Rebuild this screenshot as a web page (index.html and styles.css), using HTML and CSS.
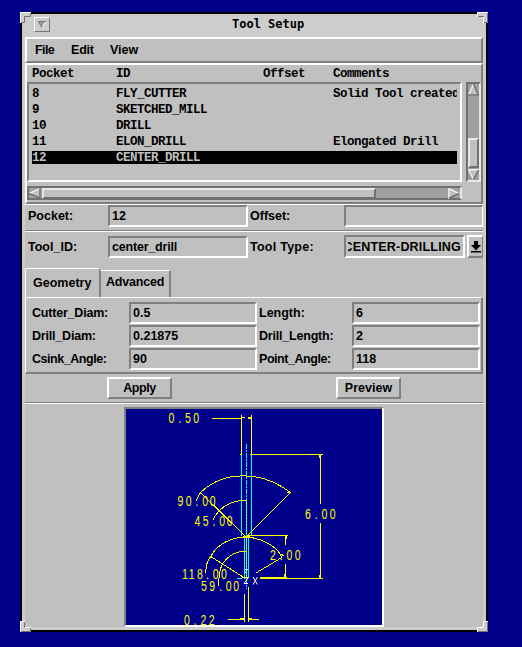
FILE: index.html
```html
<!DOCTYPE html>
<html lang="en">
<head>
<meta charset="utf-8">
<title>Tool Setup</title>
<link rel="stylesheet" href="styles.css">
</head>
<body>
<main class="window">
  <svg class="corner tl" viewBox="0 0 11 11"><path class="face" d="M0 0H11V5H5V11H0Z"/><path class="hi" d="M.5 11V.5H11"/><path class="lo" d="M10.5 1V4.5H4.5V10.5H1"/></svg>
  <svg class="corner tr" viewBox="0 0 11 11"><path class="face" d="M0 0H11V11H6V5H0Z"/><path class="hi" d="M.5 5V.5H11M6.5 5V11"/><path class="lo" d="M1 4.5H6.5M10.5 1V10.5H7"/></svg>
  <svg class="corner bl" viewBox="0 0 11 11"><path class="face" d="M0 0H5V6H11V11H0Z"/><path class="hi" d="M.5 11V.5H5M5 6.5H11"/><path class="lo" d="M4.5 1V6.5M10.5 7V10.5H1"/></svg>
  <svg class="corner br" viewBox="0 0 11 11"><path class="face" d="M6 0H11V11H0V6H6Z"/><path class="hi" d="M11 .5H6.5V6.5H.5V11"/><path class="lo" d="M10.5 1V10.5H1"/></svg>

  <header class="titlebar">
    <button class="sysmenu" aria-label="Window menu"><svg width="8" height="8" viewBox="0 0 8 8"><path d="M0 0H8L4 7Z" fill="#a0a0a0"/><path d="M0 .5H8M.5 0L4 7" fill="none" stroke="#777"/><path d="M7.5 1L4 7.5" stroke="#fff"/></svg></button>
    <h1>Tool Setup</h1>
  </header>

  <nav class="menubar"><span class="m1">File</span><span class="m2">Edit</span><span class="m3">View</span></nav>

  <section class="tools">
    <div class="row head"><span>Pocket</span><span>ID</span><span>Offset</span><span>Comments</span></div>
    <div class="listarea">
      <div class="list">
        <div class="row"><span>8</span><span>FLY_CUTTER</span><span></span><span>Solid Tool created</span></div>
        <div class="row"><span>9</span><span>SKETCHED_MILL</span><span></span><span></span></div>
        <div class="row"><span>10</span><span>DRILL</span><span></span><span></span></div>
        <div class="row"><span>11</span><span>ELON_DRILL</span><span></span><span>Elongated Drill</span></div>
        <div class="row selected"><span>12</span><span>CENTER_DRILL</span><span></span><span></span></div>
      </div>
      <div class="vscroll">
        <svg width="11" height="12" viewBox="0 0 11 12"><path d="M5.5 0L11 12H0Z" fill="#c0c0c0"/><path d="M5.5 0L.7 11" stroke="#eee" stroke-width="1.5"/><path d="M5.5 0L10.5 11H0" fill="none" stroke="#707070" stroke-width="1.5"/></svg>
        <div class="vthumb"></div>
        <svg width="11" height="11" viewBox="0 0 11 11"><path d="M0 0H11L5.5 11Z" fill="#c0c0c0"/><path d="M11 .7H.5L5.5 10.5" fill="none" stroke="#eee" stroke-width="1.4"/><path d="M10.5 1L5.5 10.5" stroke="#707070" stroke-width="1.5"/></svg>
      </div>
    </div>
    <div class="hscroll">
      <svg width="12" height="11" viewBox="0 0 12 11"><path d="M0 5.5L12 0V11Z" fill="#c0c0c0"/><path d="M0 5.5L11 .5" stroke="#eee" stroke-width="1.5"/><path d="M0 5.5L11 10.3V0" fill="none" stroke="#707070" stroke-width="1.5"/></svg>
      <div class="hthumb"></div>
      <svg width="12" height="11" viewBox="0 0 12 11"><path d="M12 5.5L0 0V11Z" fill="#c0c0c0"/><path d="M11 5.5L1 .7V11" fill="none" stroke="#eee" stroke-width="1.5"/><path d="M1 10.3L11 5.5" stroke="#707070" stroke-width="1.5"/></svg>
    </div>
  </section>

  <section class="form">
    <div class="line first">
      <label>Pocket:</label><div class="field">12</div><label class="second">Offset:</label><div class="field edge"></div>
    </div>
    <div class="line second-line">
      <label>Tool_ID:</label><div class="field snug">center_drill</div><label class="second wide">Tool Type:</label>
      <div class="combo"><div class="field"><span class="clip"><span class="type">CENTER-DRILLING</span></span></div>
      <button class="drop" aria-label="Choose type"><svg width="10" height="12" viewBox="0 0 10 12"><path d="M3 0H7V4H10L5 9.5L0 4H3ZM0 10H10V11.5H0Z"/></svg></button></div>
    </div>
  </section>

  <section class="tabs">
    <div class="tab active">Geometry</div><div class="tab other">Advanced</div>
  </section>
  <section class="panel">
    <label class="snug">Cutter_Diam:</label><div class="field">0.5</div><label class="right">Length:</label><div class="field">6</div>
    <label class="snug">Drill_Diam:</label><div class="field">0.21875</div><label class="right snug">Drill_Length:</label><div class="field">2</div>
    <label class="tight">Csink_Angle:</label><div class="field">90</div><label class="right tight">Point_Angle:</label><div class="field">118</div>
  </section>

  <section class="actions"><button class="tight">Apply</button><button>Preview</button></section>

  <section class="preview">
    <svg class="drawing" viewBox="126 409 256 216" width="256" height="216">
      <g class="cyan">
        <path d="M241.5 454V536M251.5 454V536M244.5 537V577M248.5 537V577M237 578.5H242"/>
        <path d="M246.5 444V589" stroke-dasharray="5 1 2 1"/>
      </g>
      <g class="yellow">
        <path d="M212 418.5H242M241.5 415V454M251.5 415V454M240 454.5H242M242 417.5H245M248 417.5H252M248 418.5H251"/>
        <path d="M250 454.5H323M320.5 454V504M319.5 455V458M320.5 523V578M319.5 575V578"/>
        <path d="M248 535.5H288M285.5 535V545M286.5 536V539M285.5 564V577M284.5 574V577M260 577.5H287M260 578.5H323"/>
        <path class="curve" d="M196 501L198 497L201 492A62 62 0 0 1 246 476C263 476 279 484 290.5 492.5L247 536M287 492H290M200 492L245 536"/>
        <path class="curve" d="M213 520Q222 501 246 500M206 573Q205 564 211 556C218 543 233 537 246 537C263 538 278 547 282 558M210 556L243 577M281 558L256 573M284 556L281 554M219 586Q218 572 223 563Q232 551 246 551"/>
        <path d="M246.5 500V577" stroke-dasharray="1 2"/>
        <path d="M244.5 594V622M248.5 587V622M228 619.5H244M240 618.5H244M249 619.5H259M249 618.5H252M243 536.5H250M242 577.5H249"/>
      </g>
      <g class="dim">
        <text transform="translate(168.5 423) scale(.75 1)" x="0 13 22 33">0.50</text>
        <text transform="translate(177.5 505.5) scale(.75 1)" x="0 11 24 33 43">90.00</text>
        <text transform="translate(194.5 525.5) scale(.75 1)" x="0 11 24 33 43">45.00</text>
        <text transform="translate(305 519) scale(.75 1)" x="0 13 22 33">6.00</text>
        <text transform="translate(270 560) scale(.75 1)" x="0 13 22 33">2.00</text>
        <text transform="translate(182 578.5) scale(.75 1)" x="0 9 20 32 41 52">118.00</text>
        <text transform="translate(201 590.5) scale(.75 1)" x="0 11 24 33 43">59.00</text>
        <text transform="translate(184 624.5) scale(.75 1)" x="0 13 22 33">0.22</text>
      </g>
      <path class="axes" d="M245 569.5H247.5L245 573M244 578H248L244 583.5H248M253 577L257.5 584.5M257.5 577L253 584.5"/>
    </svg>
  </section>
</main>
</body>
</html>
```
FILE: styles.css
```css
* { box-sizing: border-box; }
body {
  margin: 0;
  padding: 12px 0 0 20px;
  height: 647px;
  overflow: hidden;
  background: #00008b;
  color: #000;
  font: bold 12.5px/20px "Liberation Sans", sans-serif;
}
svg { display: block; flex: none; }
button { font: inherit; color: inherit; padding: 0; margin: 0; background: #c0c0c0; border-radius: 0; }

.window {
  position: relative;
  width: 468px;
  height: 620px;
  border: 2px solid #000;
  background: #cdcdcd;
  padding: 0 3px 3px;
}
.corner { position: absolute; width: 11px; height: 11px; }
.corner.tl { left: -2px; top: -2px; }
.corner.tr { right: -2px; top: -2px; }
.corner.bl { left: -2px; bottom: -2px; }
.corner.br { right: -2px; bottom: -2px; }
.face { fill: #cdcdcd; }
.hi { fill: none; stroke: #fff; }
.lo { fill: none; stroke: #707070; }

.titlebar { height: 23px; display: flex; padding: 3px 0 0 9px; }
.sysmenu {
  width: 16px; height: 15px;
  display: flex; align-items: center; justify-content: center;
  background: #cdcdcd;
  border: 1px solid; border-color: #fff #777 #777 #fff;
}
.titlebar h1 {
  margin: 0 0 0 182px;
  font: bold 12px/15px "DejaVu Sans Mono", monospace;
  white-space: nowrap;
}

.menubar {
  height: 26px;
  background: #c0c0c0;
  border: 2px solid; border-color: #fff #808080 #808080 #fff;
  display: flex; padding-left: 8px;
  line-height: 22px;
}
.m1 { width: 36px; letter-spacing: -.6px; }
.m2 { width: 39px; letter-spacing: -.2px; }

.tools {
  height: 141px;
  background: #c0c0c0;
  border: 2px solid; border-color: #fff #808080 #808080 #fff;
  font: bold 12.5px/18px "Liberation Mono", monospace;
  letter-spacing: -.5px;
}
.row {
  display: grid;
  grid-template-columns: 84px 147px 70px 124px;
  height: 16px;
  white-space: nowrap;
  overflow: hidden;
}
.head { padding-left: 5px; height: 17px; }
.listarea { display: flex; justify-content: space-between; height: 100px; }
.list {
  width: 435px;
  padding: 1px 3px 0;
  border: 2px solid; border-color: #808080 #fff #fff #808080;
}
.list .row span { overflow: hidden; }
.selected { background: #000; color: #c0c0c0; }
.list .selected { height: 13px; line-height: 14px; margin-top: 2px; }
.vscroll {
  width: 15px;
  background: #a0a0a0;
  border: 2px solid; border-color: #707070 #e8e8e8 #e8e8e8 #707070;
  display: flex; flex-direction: column; justify-content: space-between;
}
.vthumb {
  height: 30px; margin-top: auto; margin-bottom: 1px;
  background: #c0c0c0;
  border: 2px solid; border-color: #e8e8e8 #707070 #707070 #e8e8e8;
}
.hscroll {
  width: 435px; height: 14px; margin-top: 4px;
  background: #a0a0a0;
  border: 2px solid; border-color: #707070 #e8e8e8 #707070 #707070;
  display: flex; justify-content: space-between;
}
.hthumb {
  width: 334px; height: 11px; margin-right: auto; margin-left: 1px;
  background: #c0c0c0;
  border: 2px solid; border-color: #e8e8e8 #707070 #707070 #e8e8e8;
}

.form { background: #c0c0c0; border-top: 1px solid #fff; height: 64px; }
.line { display: grid; grid-template-columns: 83px 140px 96px 139px; }
.first { height: 26px; border-bottom: 1px solid #808080; }
.second-line { height: 37px; padding-top: 4px; border-top: 1px solid #fff; }
.form label { padding-left: 3px; line-height: 22px; }
.form label.second { padding-left: 2px; }
.form label.wide { letter-spacing: .25px; }
.snug { letter-spacing: -.2px; }
.tight { letter-spacing: -.45px; }
.field {
  height: 22px;
  padding-left: 2px;
  line-height: 18px;
  white-space: nowrap;
  border: 2px solid; border-color: #808080 #fff #fff #808080;
}
.edge { border-right-width: 1px; }
.combo { display: flex; gap: 2px; }
.combo .field { width: 121px; height: 23px; margin-top: -1px; }
.clip { display: flex; justify-content: flex-end; width: 113px; overflow: hidden; line-height: 20px; }
.type { letter-spacing: .2px; }
.drop {
  width: 16px; height: 23px; margin-top: -1px;
  border: 2px solid; border-color: #fff #808080 #808080 #fff;
  border-right-width: 1px;
  display: flex; align-items: center; justify-content: center;
}

.tabs { display: flex; background: #c0c0c0; height: 29px; }
.tab { border: 1px solid #fff; border-bottom: 0; }
.active { width: 75px; padding-left: 7px; border-right: 1px solid #808080; border-top-left-radius: 2px; line-height: 29px; }
.other { width: 71px; height: 27px; margin-top: 2px; padding-left: 5px; border-left: 1px solid #808080; border-right: 2px solid #808080; line-height: 23px; letter-spacing: -.2px; }
.panel {
  height: 77px;
  padding: 4px 0 0 6px;
  background: #c0c0c0;
  border: 1px solid #fff; border-right: 2px solid #808080; border-bottom: 2px solid #808080;
  display: grid;
  grid-template-columns: 97px 128px 95px 128px;
  grid-auto-rows: 22px;
  row-gap: 1px;
}
.panel label { line-height: 22px; white-space: nowrap; }
.panel .right { padding-left: 2px; }

.actions {
  height: 29px;
  background: #c0c0c0;
  border-bottom: 1px solid #808080;
  display: flex; gap: 164px;
  padding: 3px 0 0 82px;
}
.actions button {
  width: 65px; height: 22px; line-height: 18px;
  border: 2px solid; border-color: #fff #808080 #808080 #fff;
}
.preview {
  height: 224px;
  background: #c0c0c0;
  border-top: 1px solid #fff;
  padding: 3px 0 0 99px;
}
.drawing {
  box-sizing: content-box;
  background: #00008b;
  border: 2px solid; border-color: #808080 #fff #fff #808080;
}
.cyan path { fill: none; stroke: #0ff; shape-rendering: crispEdges; }
.yellow path { fill: none; stroke: #ff0; shape-rendering: crispEdges; }
.axes { fill: none; stroke: #fff; }
.dim text { fill: #ff0; font: normal 14px "Liberation Sans", sans-serif; }
```
